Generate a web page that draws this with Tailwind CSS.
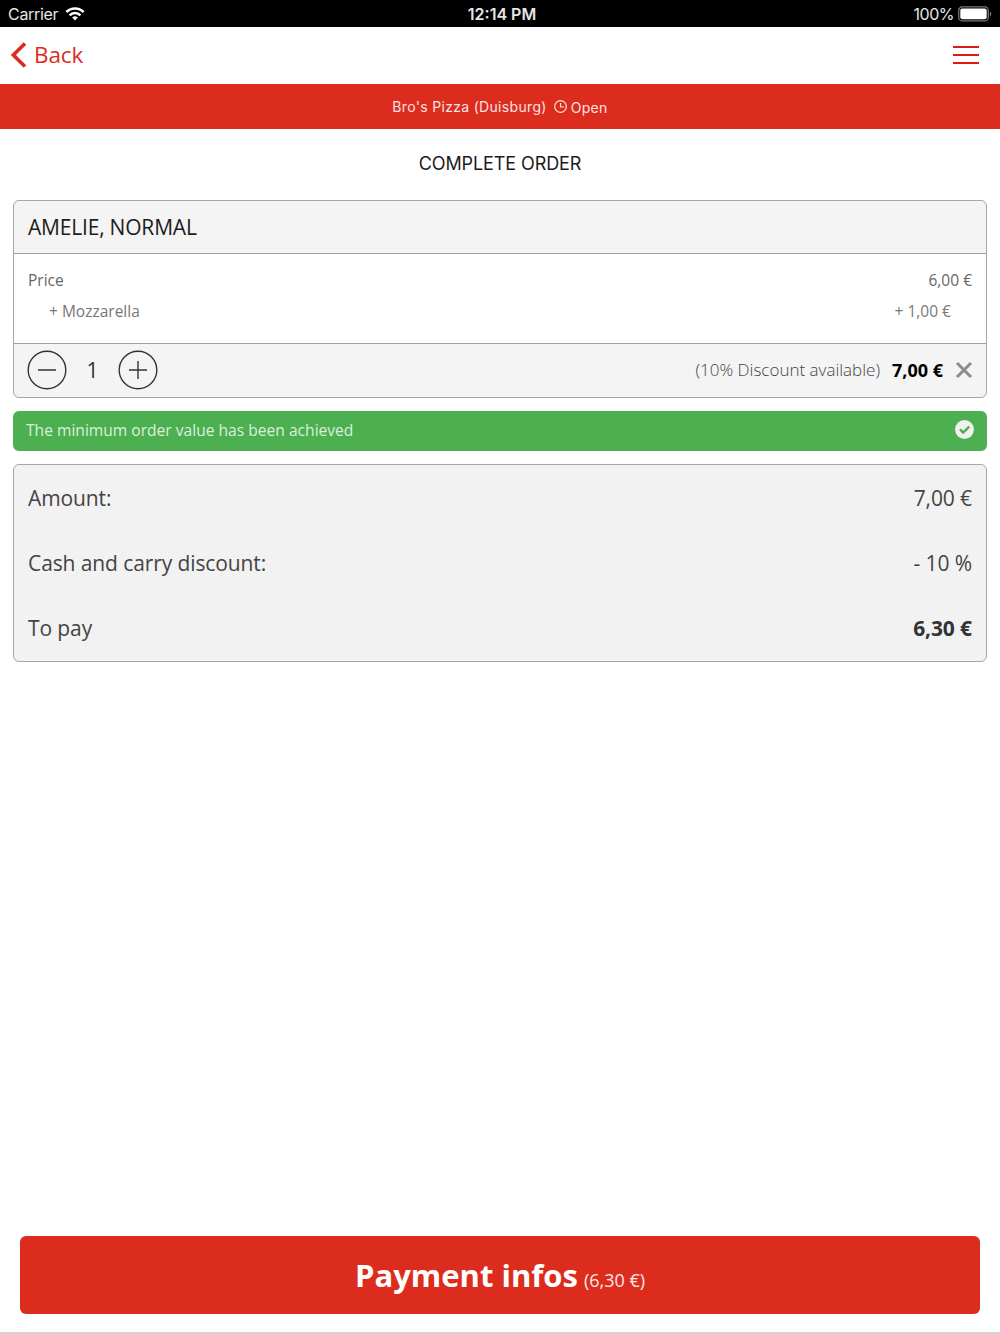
<!DOCTYPE html>
<html lang="en">
<head>
  <meta charset="UTF-8" />
  <meta name="viewport" content="width=device-width, initial-scale=1.0" />
  <title>Complete order</title>
  <script src="https://cdn.jsdelivr.net/npm/@tailwindcss/browser@4"></script>
</head>
<body class="bg-white font-['Open_Sans',sans-serif]">
  <div class="flex h-[1334px] w-[1000px] flex-col overflow-hidden border-b-2 border-[#d2d2d2]">

    <!-- Status bar -->
    <div class="grid h-[27px] shrink-0 grid-cols-3 items-center bg-black pt-px pr-2 pl-2 font-['Inter',sans-serif] text-[16px] text-[#e6e6e6]">
      <div class="flex items-center gap-[7px]">
        <span class="tracking-[-0.3px]">Carrier</span>
        <svg class="h-[14px] w-[20px]" viewBox="0 0 20 14" fill="none" stroke="#fff" stroke-width="2.6">
          <path d="M1.4 5a12.2 12.2 0 0 1 17.2 0" />
          <path d="M4.6 8.3a7.6 7.6 0 0 1 10.8 0" />
          <path d="M10 13.4L7.2 10.6a4 4 0 0 1 5.6 0z" fill="#fff" stroke="none" />
        </svg>
      </div>
      <span class="pl-1 text-center font-semibold">12:14 PM</span>
      <div class="flex items-center justify-end gap-1">
        <span class="tracking-[-0.5px]">100%</span>
        <svg class="h-4 w-[34px]" viewBox="0 0 34 16">
          <rect x=".7" y=".9" width="29.6" height="14" rx="3.5" fill="none" stroke="#777" stroke-width="1.3" />
          <rect x="2.3" y="2.6" width="26.4" height="10.6" rx="2" fill="#fff" />
          <path d="M31.8 5.6c2 .7 2 4.1 0 4.8z" fill="#777" />
        </svg>
      </div>
    </div>

    <!-- Navigation -->
    <div class="flex h-[57px] shrink-0 items-center justify-between pr-[21px] pb-px pl-[11px] text-[#dd2c1e]">
      <a class="flex items-center gap-[7px] text-[22.5px] tracking-[-0.1px]">
        <svg class="h-[26px] w-4" viewBox="0 0 16 26" fill="none" stroke="currentColor" stroke-width="3.6">
          <path d="M14 1.5L2.4 13 14 24.5" />
        </svg>
        <span>Back</span>
      </a>
      <div class="flex w-[26px] flex-col gap-[6px]">
        <div class="h-[2px] bg-[#dd1c12]"></div>
        <div class="h-[2px] bg-[#dd1c12]"></div>
        <div class="h-[2px] bg-[#dd1c12]"></div>
      </div>
    </div>

    <!-- Restaurant -->
    <div class="flex h-[45px] shrink-0 items-center justify-center bg-[#dc2c1e] font-['Inter',sans-serif] text-[14px] text-[#fbe3e1]">
      <span class="tracking-[0.32px]">Bro's Pizza (Duisburg)</span>
      <svg class="mr-1 ml-[7px] h-[13px] w-[13px]" viewBox="0 0 13 13" fill="none" stroke="currentColor" stroke-width="1.2">
        <circle cx="6.5" cy="6.5" r="5.8" />
        <path d="M6.5 3v4H10" />
      </svg>
      <span class="pt-px tracking-[0.3px]">Open</span>
    </div>

    <h1 class="flex h-[71px] shrink-0 items-center justify-center pb-[2px] font-['Inter',sans-serif] text-[18px] tracking-[-0.1px] text-[#1c1c1c]">COMPLETE ORDER</h1>

    <!-- Order item -->
    <div class="mx-[13px] flex h-[198px] shrink-0 flex-col overflow-hidden rounded-md border border-[#aaa4a4] bg-[#f4f4f4]">
      <div class="flex h-[52px] items-center px-[14px] pt-[2px] text-[21px] tracking-[-0.2px] text-[#1c1c1c]">AMELIE, NORMAL</div>
      <div class="flex h-[91px] flex-col border-y border-[#a39f9f] bg-white px-[14px] pt-[11px] text-[15.5px] text-[#666]">
        <div class="flex h-[31px] items-center justify-between">
          <span>Price</span>
          <span>6,00 €</span>
        </div>
        <div class="flex h-[31px] items-center justify-between px-[21px] text-[#777]">
          <span>+ Mozzarella</span>
          <span>+ 1,00 €</span>
        </div>
      </div>
      <div class="flex flex-1 items-center justify-between px-[13px] pb-[2px]">
        <div class="flex items-center text-[21px] text-[#333]">
          <svg class="h-10 w-10" viewBox="0 0 40 40" fill="none" stroke="currentColor" stroke-width="1.4">
            <circle cx="20" cy="20" r="18.8" />
            <path d="M11 20h18" />
          </svg>
          <span class="w-[51px] pt-[2px] text-center">1</span>
          <svg class="h-10 w-10" viewBox="0 0 40 40" fill="none" stroke="currentColor" stroke-width="1.4">
            <circle cx="20" cy="20" r="18.8" />
            <path d="M11 20h18M20 11v18" />
          </svg>
        </div>
        <div class="flex items-center text-[18px]">
          <span class="text-[17px] font-light text-[#444]">(10% Discount available)</span>
          <span class="ml-3 pt-px font-bold text-black">7,00 €</span>
          <svg class="ml-3 h-[18px] w-[18px]" viewBox="0 0 18 18" stroke="#8c8c8c" stroke-width="3">
            <path d="M2 2l14 14M16 2L2 16" />
          </svg>
        </div>
      </div>
    </div>

    <!-- Minimum order notice -->
    <div class="mx-[13px] mt-[13px] flex h-10 shrink-0 items-center justify-between rounded-md bg-[#4caf50] px-[13px] pb-[3px] text-[15.6px] text-[#dcefdc]">
      <span class="pt-[2px]">The minimum order value has been achieved</span>
      <svg class="h-[19px] w-[19px]" viewBox="0 0 19 19">
        <circle cx="9.5" cy="9.5" r="9.4" fill="#f1f1f1" />
        <path d="M5 9.4l3.2 3.2 6-6" fill="none" stroke="#4caf50" stroke-width="2.4" />
      </svg>
    </div>

    <!-- Totals -->
    <div class="mx-[13px] mt-[13px] flex h-[198px] shrink-0 flex-col rounded-md border border-[#aaa4a4] bg-[#f2f2f2] px-[14px] pt-px text-[21px] tracking-[-0.1px] text-[#444]">
      <div class="flex h-[65px] items-center justify-between">
        <span>Amount:</span>
        <span>7,00 €</span>
      </div>
      <div class="flex h-[65px] items-center justify-between">
        <span>Cash and carry discount:</span>
        <span>- 10 %</span>
      </div>
      <div class="flex h-[65px] items-center justify-between">
        <span>To pay</span>
        <span class="font-bold text-[#333]">6,30 €</span>
      </div>
    </div>

    <!-- Payment button -->
    <button class="mx-5 mt-auto mb-[18px] flex h-[78px] shrink-0 items-baseline justify-center gap-[6px] rounded-md bg-[#dc2c1e] pt-4 text-white">
      <span class="text-[31px] font-bold">Payment infos</span>
      <span class="text-[18px] text-[#fde8e6]">(6,30 €)</span>
    </button>
  </div>
</body>
</html>
